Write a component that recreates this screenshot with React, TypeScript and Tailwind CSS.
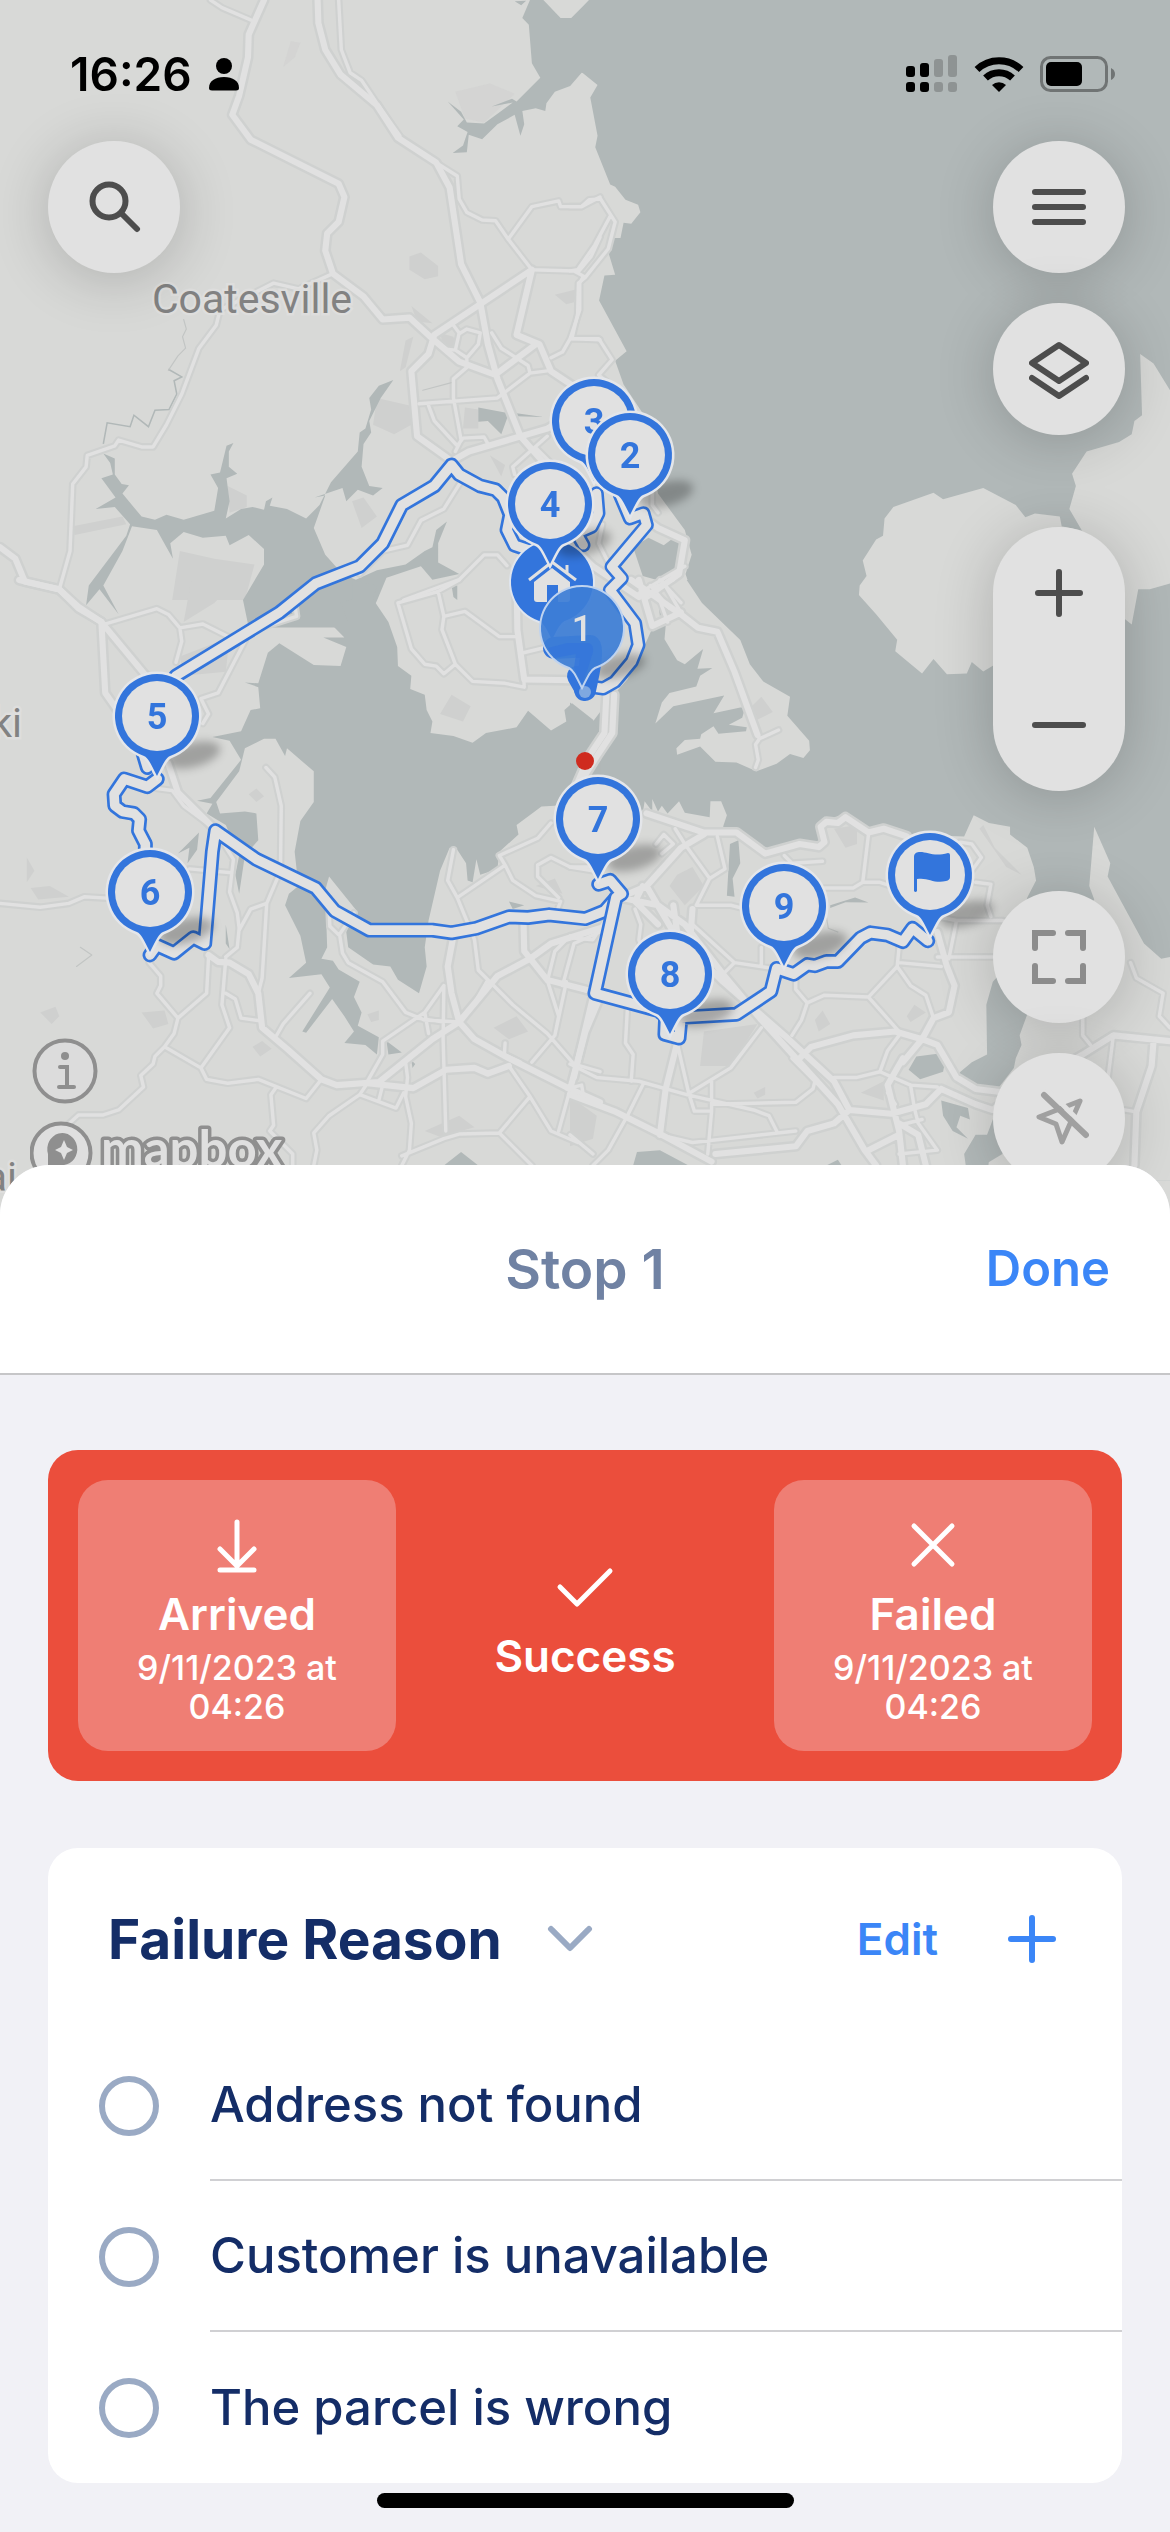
import React from "react";

/* ---------- Map data: four tiles, each on its own 1568-unit grid ---------- */

type Tile = { x: number; y: number; major: string[]; minor: string[]; thin: string[] };

const T = 600 / 1568;

const tiles: Tile[] = [
  {
    x: 0,
    y: 0,
    major: [
      "M690 0L650 90 648 150 625 250 607 300 655 365 885 480 900 515 885 580 855 610 850 655 870 715 950 775 1000 835 1070 830 1130 885 1200 945 1295 980",
      "M830 0L832 60 850 130 890 195 985 275 1040 360 1140 425 1175 490 1205 690 1255 790 1275 900 1300 990 1360 1140 1430 1220",
      "M1390 705L1135 875 1120 925 1075 970 1090 1140 1180 1205 1225 1180 1430 1120 1500 1080",
      "M1390 705L1350 875 1410 900 1440 970 1500 1010",
      "M1300 975L1400 900",
      "M0 1430L40 1460 65 1520 155 1540 205 1590 265 1625",
    ],
    minor: [
      "M550 0L580 20 655 52",
      "M885 0L892 130 915 190 945 210 985 270 1045 355",
      "M1140 425L1195 460 1200 520 1220 555 1260 575 1295 577 1328 625 1390 540 1460 525 1465 540 1520 540 1568 515",
      "M1328 625L1390 705 1500 708 1525 722 1515 740 1515 810 1490 885 1470 920 1440 935",
      "M1490 885L1568 888",
      "M1510 712L1545 670 1568 620",
      "M870 715L780 755 715 740 575 810 565 850 520 910 475 1030 435 1110 400 1168 370 1168 310 1150 300 1165 228 1190 225 1220 190 1265 183 1440 155 1540",
      "M1185 850L1200 870 1190 915 1220 935 1250 900 1255 870 1220 860 1200 872M1160 912L1190 915",
      "M1220 935L1220 960 1185 990 1185 1040 1205 1150 1190 1180",
      "M1095 1055L1300 1040 1385 975 1380 955 1310 910 1285 870M1385 975L1440 968",
      "M1120 1060L1135 1100 1195 1165 1210 1145 1265 1142 1275 1160",
      "M1210 1250L1160 1330 1100 1360 1065 1425 1000 1440 940 1500",
      "M1055 1568L1200 1515 1265 1450 1300 1450 1325 1478",
      "M1430 1140L1340 1220 1345 1240M1400 1170L1460 1230",
    ],
    thin: ["M480 835L487 860 477 880 485 910 465 930 440 968", "M1105 1020L1180 1000"],
  },
  {
    x: 570,
    y: 0,
    major: ["M190 1350L230 1380 300 1412 285 1500 200 1560", "M0 1420L60 1480 180 1560", "M0 1080L40 1060"],
    minor: [
      "M0 540L30 540 50 522 80 520 118 580 100 650 40 725 22 740 20 820 5 885 75 885 110 940 75 980 130 1025",
      "M105 565L65 640 20 705 0 708",
      "M215 1290L215 1320 230 1340",
      "M180 1550L300 1480M210 1530L260 1590M235 1515L290 1575",
      "M85 1370L75 1420 100 1470",
    ],
    thin: [],
  },
  {
    x: 0,
    y: 580,
    major: [
      "M50 0L155 25 205 70 265 110 385 255",
      "M265 110L275 295 310 345",
      "M440 480L465 555 560 650",
      "M545 980L570 998 600 1000 650 1030 675 1080 685 1170 750 1225 840 1305 880 1320 990 1312 1130 1200 1200 1155 1300 1035 1385 990 1440 950 1568 910",
      "M1185 930L1170 1010 1180 1080 1200 1155 1240 1200 1330 1250 1490 1330 1568 1365",
      "M960 1315L1080 1328 1165 1280 1240 1275 1275 1290 1330 1270",
      "M1350 0L1352 130 1370 260 1500 262",
      "M1368 890L1370 970 1430 1045 1568 1080",
      "M1568 1090L1530 1180 1490 1330",
      "M1605 300L1600 400 1560 460 1510 540",
    ],
    minor: [
      "M265 118L410 75 440 90 470 125 475 160 460 215M470 125L530 115 600 150 775 95 770 60",
      "M640 160L570 295 525 310 545 350 530 375",
      "M410 545L450 550 480 590 560 650 610 730 600 815 620 870 625 910 620 960 590 985",
      "M0 845L105 855 180 845 220 828 290 832",
      "M495 755L605 765",
      "M695 490L718 515 735 590 733 760 697 845 690 960 685 1040 675 1080",
      "M697 845L655 860 625 915",
      "M390 1000L420 1035 420 1060 410 1080 465 1145 455 1185 430 1220 405 1245 400 1265 368 1295 375 1325 310 1385 270 1398 205 1398 170 1430",
      "M545 985L540 1080 465 1145M430 1220L525 1275 600 1170 580 1110 590 990",
      "M590 1080L615 1095 630 1145 680 1152",
      "M525 1275L540 1305 595 1315 675 1305 800 1355 840 1305",
      "M720 1195L740 1160 810 1080M720 1328L708 1345 715 1425 705 1440 765 1500 765 1530",
      "M860 860L862 905 888 930 895 975 910 1000 1000 1050 1060 1130 1110 1150 1200 1155",
      "M925 870L888 925",
      "M1185 705L1170 785 1195 830 1240 940 1250 1020 1340 1110 1430 1185 1500 1265 1568 1285",
      "M1195 830L1320 745 1305 720 1405 675 1440 635M1320 745L1340 785 1400 825 1465 840 1450 880",
      "M1460 830L1405 775 1405 745 1440 725 1490 750 1568 750",
      "M1040 60L1145 30 1200 0M1145 30L1160 95 1215 82 1305 148 1350 148M1160 95L1155 130 1190 220 1160 245 1140 225 1110 220 1075 180 1040 60",
      "M1190 220L1235 265 1320 270 1370 280 1368 240M1368 190L1430 175",
      "M1160 1060L1158 1200 1165 1440M1160 1060L1110 1130 1000 1205 1000 1240 960 1310",
      "M1110 1130L1120 1185M1090 1145L1160 1155M1275 1045L1240 1105M1240 1105L1190 1160",
      "M1060 1260L1065 1300 1060 1350 1075 1420 1070 1490 1050 1530",
      "M960 1315L940 1345 1035 1380 1055 1340M1000 1320L990 1360M940 1345L860 1400 820 1445 828 1490 820 1530",
      "M1050 1505L1160 1460 1200 1448 1305 1445 1385 1350 1330 1270M1305 1445L1390 1530",
      "M1385 1350L1440 1440 1510 1470M1490 1330L1460 1440M1430 1045L1460 1140 1450 1190 1390 1260M1480 1050L1450 1190",
      "M1430 1050L1450 970 1490 930M1568 920L1500 950 1470 1060",
      "M1320 1210L1318 1240 1360 1260M1480 1330L1520 1320 1525 1350",
    ],
    thin: ["M200 1010L240 980 210 960"],
  },
  {
    x: 570,
    y: 580,
    major: [
      "M160 0L290 90 335 125 385 135 430 240 490 405",
      "M95 300L90 400 50 460 15 540",
      "M290 85L215 120 180 0",
      "M200 610L350 660 435 660 510 715 600 690 650 698 665 685 655 645 670 632 700 635 720 620 780 660 820 650 880 670",
      "M350 665L290 700 200 800 130 830",
      "M130 830L230 850 300 900 400 1030 500 1150 600 1260 700 1370 770 1490 800 1530",
      "M200 800L270 920 400 1050 560 1190 690 1310 730 1385 840 1395 930 1370 970 1330",
      "M600 1250L630 1220 740 1190 850 1180 920 1200 960 1215 1010 1300 1060 1330 1140 1340",
      "M870 1250L830 1320 860 1440 870 1530M920 1200L870 1260",
      "M960 920L985 1010 1005 1060 990 1130 950 1145 920 1200",
      "M0 1345L120 1390 240 1450 370 1520",
      "M380 1500L590 1480 620 1440 690 1420 730 1385",
      "M970 1330L1060 1370 1105 1385 1160 1340 1340 1240 1420 1190 1568 1205",
      "M1525 1205L1520 1270 1480 1390 1475 1530",
      "M60 1090L10 1300M280 1210L250 1330 235 1450",
      "M190 800L170 840 230 900M270 850L280 920M320 860L315 930",
      "M860 1420L910 1450 930 1530",
      "M780 1490L860 1450",
    ],
    minor: [
      "M490 405L495 415 485 430 492 470 485 490M495 415L545 392",
      "M195 40L230 40 255 110M240 0L290 85M215 20L270 0",
      "M385 670L405 755 365 780 300 690M365 780L330 850 420 850 460 860",
      "M275 650L300 690M225 690L245 665 270 690 240 715",
      "M780 665L765 790 810 790 840 800M765 790L740 805 665 805M560 720L580 740 660 735",
      "M1020 685L1050 690 1075 725 1050 760M1060 790L1100 795 1090 850 1100 880",
      "M960 880L1010 890 1130 890 1170 900M1010 890L990 990M960 985L1130 985",
      "M860 960L855 1010 780 1090 665 1085 620 1105 590 1070 590 1040M855 1010L890 1060 930 1085 950 1145M860 1000L970 1010",
      "M780 1090L860 1180M620 1105L605 1150 580 1190",
      "M500 1170L420 1275 305 1345 180 1310 70 1300 0 1265",
      "M280 1210L310 1340 325 1388 370 1388 370 1310M305 1345L480 1385 520 1400 540 1440",
      "M150 1120L145 1210 165 1240 160 1310",
      "M370 1370L590 1365 635 1330 640 1310 580 1250",
      "M235 1450L320 1470 590 1440M370 1388L360 1500",
      "M690 1300L750 1300 810 1285 890 1320 960 1325M810 1285L830 1230 860 1190M890 1320L900 1380 910 1420 960 1490 860 1500",
      "M320 900L430 1000 530 1015M430 1000L400 1030M500 960L500 1010",
      "M0 935L60 940 130 830M0 1060L60 1080M0 750L60 760M0 1450L60 1500",
      "M190 1320L150 1400M150 1400L100 1490 60 1530",
      "M1420 1190L1405 1310 1400 1440M1340 1140L1340 1190 1360 1215M1465 1000L1480 1040 1550 1080 1540 1140 1568 1170M1420 1380L1480 1390",
      "M170 860L185 900 180 940 200 1000",
      "M860 1425L920 1410M850 1370L830 1340",
    ],
    thin: ["M670 880L675 910 700 920"],
  },
];

const WATER = "#b1b8b8";
const LAND = "#d8d9d7";
const BLUE = "#3375dc";

const at = (x: number, y: number, s = T) => `translate(${x} ${y}) scale(${s})`;

function Terrain() {
  return (
    <>
      <rect width="1170" height="1300" fill={LAND} />
      <g fill="#cfd0cf" transform={at(0, 0)}>
        <path d="M1070 670L1100 660 1145 695 1145 722 1110 730 1070 705ZM1075 800L1130 845 1090 840ZM985 1040L1070 1060 1075 1110 1030 1135 975 1110ZM190 1375L320 1350 330 1370 195 1398ZM595 1270L645 1295 645 1325 600 1340ZM920 1310L950 1300 985 1350 945 1380ZM1280 1190L1320 1215 1310 1245ZM470 1440L560 1460 665 1475 640 1568 450 1568ZM1060 890L1080 880 1060 960 1045 970ZM1215 1065L1250 1070 1250 1120 1210 1120ZM1150 870L1185 880 1190 905 1160 910ZM1450 770L1510 755 1500 790 1480 795Z" />
        <path d="M740 175L760 108 785 112 770 150ZM1190 240L1280 218 1345 245 1265 320 1215 310Z" opacity=".5" />
      </g>
      <g fill="#cfd0cf" transform={at(0, 580)}>
        <path d="M105 1130L145 1115 155 1140 135 1160ZM370 1130L430 1125 440 1160 400 1172ZM660 1220L685 1205 710 1225 680 1245ZM960 1135L990 1125 990 1150 970 1155ZM70 725L90 760 70 790ZM80 805L130 800 180 828 100 835ZM650 560L670 545 690 565 670 580ZM470 200L600 150 590 240 480 250ZM1110 1440L1200 1400 1240 1430 1150 1455ZM1290 1170L1350 1140 1380 1180 1330 1200ZM1180 300L1230 330 1210 370 1150 350ZM1400 800L1450 780 1470 820ZM500 0L620 0 560 60 480 110Z" />
      </g>
      <g fill={WATER} transform={at(0, 0)}>
        <path d="M1385 0L1365 47 1382 65 1390 165 1412 203 1350 265 1338 258 1285 278 1340 268 1310 290 1265 323 1220 320 1205 292 1170 265 1212 312 1195 330 1222 345 1210 380 1183 400 1220 398 1225 352 1260 364 1300 325 1345 300 1360 355 1370 325 1365 290 1400 283 1425 290 1428 270 1450 240 1490 225 1520 190 1625 200 1625 0 1540 0 1497 47 1465 47 1420 0ZM1345 3L1362 14 1375 2Z" />
        <path d="M250 1330L302 1300 265 1250 295 1240 288 1210 270 1185 300 1198 300 1240 318 1265 337 1268 320 1290 370 1350 405 1358 435 1345 480 1358 560 1335 570 1275 550 1240 575 1235 592 1165 610 1158 598 1180 598 1220 620 1238 592 1250 600 1310 590 1355 630 1330 660 1325 690 1332 695 1310 712 1300 705 1322 750 1330 800 1355 835 1320 865 1260 935 1180 940 1130 955 1120 970 1070 965 1040 990 1008 1028 993 995 1040 965 1100 970 1130 950 1160 945 1220 965 1270 1000 1275 975 1295 935 1280 905 1310 895 1275 822 1300 850 1295 820 1380 850 1450 895 1500 930 1515 985 1490 1060 1475 1110 1440 1130 1430 1140 1385 1168 1363 1145 1420 1145 1470 1200 1500 1130 1515 1100 1480 1010 1510 985 1570 950 1640 650 1640 635 1568 690 1475 690 1435 650 1398 600 1425 590 1400 530 1405 480 1390 445 1420 452 1460 435 1430 410 1385 345 1375 320 1440 270 1530 310 1605 260 1540 225 1582 232 1530 330 1400 340 1370 300 1325Z" />
        <path d="M1250 1065L1330 1080 1310 1135 1275 1100 1250 1102ZM1350 1080L1420 1090 1350 1088ZM1180 1530L1195 1530 1195 1568 1185 1560Z" />
        <path d="M440 965L475 985 455 995 462 1030 442 1070 405 1072 388 1115 350 1085 340 1115 280 1105 270 1160" fill="none" stroke={WATER} strokeWidth="4" />
      </g>
      <g transform={at(570, 0)}>
        <path
          fill={WATER}
          d="M50 0L0 50V215L30 188 72 222 53 255 72 355 66 385 105 482 118 488 145 522 178 535 184 555 160 585 140 582 132 622 108 622 102 665 118 718 90 720 76 785 148 918 118 943 140 1005 190 1080 230 1290 300 1385 318 1450 302 1500 335 1600H1568V0Z"
        />
        <path fill={WATER} d="M165 1430L205 1405 245 1425 265 1410 290 1420 275 1495 225 1515 190 1505Z" />
      </g>
      <g transform={at(570, 580)}>
        <path fill={WATER} d="M0 0H1568V1570H0Z" />
        <g fill={LAND}>
          <path d="M0 0H305L345 60 445 157 470 220 505 265 575 305 568 355 625 420 627 445 610 465 575 455 540 480 487 500 435 477 380 475 340 435 280 457 278 440 300 418 340 415 343 403 375 382 388 402 460 395 462 385 415 378 450 360 458 333 445 333 375 348 403 302 270 330 223 375 240 320 260 295 330 278 340 250 372 230 333 232 348 180 300 220 280 210 247 155 250 120 220 115 200 160 150 260 105 310 60 370 0 320Z" />
          <path d="M0 600L165 560 190 610 195 578 215 605 215 572 230 605 240 590 255 610 285 578 300 608 365 620 367 578 395 578 410 615 400 645 440 655 500 710 560 700 640 700 660 690 645 640 670 625 720 612 780 650 820 640 880 665 1030 670 1055 615 1095 635 1150 645 1150 665 1195 700 1212 750 1218 785 1195 830 1150 1000 1105 1050 1088 1110 1090 1240 1050 1260 1015 1290 1060 1320 1110 1340 1110 1450 1060 1450 1030 1500 1040 1570H0Z" />
          <path d="M1370 645L1412 740 1405 775 1500 950 1545 990 1568 985V1570H1090L1110 1340 1160 1275 1165 1250 1180 1215 1175 1190 1195 1135 1230 1000 1370 835 1357 800 1362 740Z" />
        </g>
        <g fill={WATER}>
          <path d="M440 680L445 740 425 780 430 828 410 825 418 690ZM885 1280L905 1245 985 1235 975 1285 915 1305ZM165 1530L175 1495 235 1490 310 1530ZM970 1360L1040 1380 1045 1410 1020 1400 1010 1430 1040 1460 1000 1440 975 1400ZM680 850L745 830 780 843 720 842 680 857ZM1120 1370L1160 1380 1130 1500 1080 1530 1090 1450ZM230 45L250 65 235 95ZM670 1530L700 1515 710 1530Z" />
        </g>
        <path
          fill="#cfd0cf"
          d="M280 770L320 750 350 800 300 850 260 800ZM350 1180L490 1160 420 1270 340 1270ZM500 305L530 345 480 370 465 340ZM1080 640L1110 700 1180 770 1140 750 1070 650ZM640 1150L660 1125 680 1160 650 1180ZM880 1140L900 1110 930 1130 890 1155ZM760 1340L820 1310 820 1360ZM0 1350L70 1400 60 1460 0 1480ZM480 1340L510 1325 510 1345 490 1355ZM690 650L750 640 750 690 720 700Z"
        />
      </g>
      <g transform={at(570, 0)} fill={LAND}>
        <path d="M845 1325L950 1288 975 1305 1080 1275 1165 1320 1190 1352 1215 1342 1280 1350 1285 1375 1400 1400V1700L1105 1740 1080 1755 1050 1730 1037 1760 985 1762 950 1722 920 1760 850 1702 855 1672 800 1605 755 1555 757 1530 775 1505 765 1465 800 1410 818 1400 822 1355Z" />
        <path d="M1490 925L1525 950 1568 1020V1525L1515 1540 1485 1540 1468 1632 1440 1610 1340 1390 1305 1330 1322 1270 1312 1238 1350 1180 1435 1155 1468 1135 1475 1100 1495 1085Z" />
      </g>
      <g transform={at(0, 580)} fill={WATER}>
        <path d="M920 0L985 15 975 50 1015 110 1038 175 1040 225 1075 250 1072 285 1110 300 1115 340 1130 370 1125 400 1185 408 1235 425 1270 400 1350 385 1380 342 1440 393 1480 370 1475 340 1495 322 1550 365 1570 410 1570 560 1450 590 1415 592 1350 640 1355 665 1305 710 1300 755 1255 770 1245 730 1235 790 1222 785 1218 740 1195 705 1175 700 1150 760 1120 890 1110 960 1115 1010 1095 1080 1040 1045 1020 1010 975 1005 910 960 905 920 930 862 860 775 850 810 855 960 840 990 870 995 885 1018 940 1050 925 1090 945 1130 935 1165 990 1195 985 1240 955 1215 900 1210 925 1180 900 1140 868 1095 800 1183 790 1180 862 1065 840 1030 755 1040 800 1000 785 930 745 850 755 820 780 800 770 710 785 630 820 580 820 500 750 440 745 460 720 415 690 415 640 440 625 500 565 580 575 610 640 605 670 610 675 680 640 720 625 820 615 770 625 720 590 640 540 610 555 585 515 577 550 570 630 470 600 420 555 410 630 395 655 340 680 335 675 280 640 268 675 270 700 190 730 165 820 222 890 225 905 175 845 150 900 150 860 110 910 110 890 60 920 50Z" />
        <path d="M465 715L520 660 515 705 490 740 495 700ZM590 900L600 965 590 950ZM1010 1205L1050 1235 1015 1240ZM1160 1530L1205 1495 1250 1530ZM1330 840L1370 850 1340 860ZM1075 1255L1085 1265 1078 1275Z" />
      </g>
    </>
  );
}

function Roads() {
  return (
    <g fill="none" strokeLinecap="round" strokeLinejoin="round">
      {(["casing", "fill"] as const).map((pass) =>
        tiles.map((t) => (
          <g key={`${pass}${t.x}-${t.y}`} transform={at(t.x, t.y)} stroke={pass === "casing" ? "#cfd1d0" : "#e1e1e1"}>
            <path d={t.minor.join("")} strokeWidth={pass === "casing" ? 20 : 9} />
            <path d={t.major.join("")} strokeWidth={pass === "casing" ? 29 : 16} />
            {pass === "casing" && <path d={t.thin.join("") || "M0 0"} stroke="#c2c5c4" strokeWidth="3" />}
          </g>
        )),
      )}
    </g>
  );
}

const routes = [
  {
    transform: at(0, 0),
    k: 1,
    d: "M1390 1440L1345 1425 1325 1385 1333 1345 1315 1300 1295 1280 1255 1270 1200 1240 1180 1215 1135 1270 1050 1320 1000 1420 940 1480 825 1525 730 1601 460 1766 411 1850",
  },
  {
    transform: at(0, 580),
    k: 1,
    d: "M370 440L385 490M411 520L385 540 325 520 298 560 300 590 320 605 350 610 365 625 362 655 380 690 378 800M392 980L410 955 455 975 505 935 535 950 555 710 563 655 670 730 825 805 875 865 965 915 1130 915 1180 922 1245 910 1330 880 1380 882 1435 875 1530 885 1580 865 1615 825",
  },
  {
    transform: at(570, 580),
    k: 1,
    d: "M75 795L105 785 135 820 120 830 65 1080 230 1125 250 1140 248 1187 285 1197 290 1143 435 1135 525 1075 540 1015 585 1030 620 1005 640 1008 670 997 700 997 760 935 785 922 830 928 870 945 895 910 935 943",
  },
  {
    transform: at(480, 360, 1 / 3),
    k: 1.1,
    d: "M350 400L355 460 335 500 290 520 310 555M420 405L450 475 490 460 500 495 395 620 425 655 390 690 465 790 475 855 455 905 405 965 370 985 330 980",
  },
];

function Routes() {
  return (
    <g fill="none" strokeLinecap="round" strokeLinejoin="round">
      {routes.map((r) => (
        <g key={r.d} transform={r.transform}>
          <path d={r.d} stroke={BLUE} strokeWidth={39 * r.k} />
          <path d={r.d} stroke="#e1e1e1" strokeWidth={25 * r.k} />
        </g>
      ))}
    </g>
  );
}

const PIN = "M-13 40A42 42 0 1 1 13 40C9 42 7 46 0 60C-7 46 -9 42 -13 40Z";

function Pin({ x, y, label }: { x: number; y: number; label?: string }) {
  return (
    <g transform={`translate(${x} ${y})`}>
      <path d={PIN} fill="#e1e1e1" stroke="#e4e6ea" strokeWidth="5" />
      <path d={PIN} fill={BLUE} />
      <circle r="35" fill="#e1e1e1" />
      {label ? (
        <text y="13" textAnchor="middle" fontSize="36" fontWeight="700" fill={BLUE} fontFamily="Roboto, sans-serif">
          {label}
        </text>
      ) : (
        <path
          d="M-16 16V-18C-16 -22 -13 -23 -10 -23C-2 -23 4 -18 18 -22Q20 -22 20 -20V2Q20 5 16 6C4 9 -2 2 -13 4V16Q-14.500 18 -16 16Z"
          fill={BLUE}
        />
      )}
    </g>
  );
}

const pinShadows = [
  [157, 716],
  [150, 892],
  [598, 819],
  [670, 974],
  [784, 906],
  [930, 875],
  [630, 455],
];

function MapCanvas() {
  return (
    <svg
      className="absolute inset-0 h-full w-full"
      viewBox="0 0 1170 1240"
      preserveAspectRatio="xMidYMin slice"
      role="img"
      aria-label="Delivery route map"
    >
      <defs>
        <filter id="soft" x="-50%" y="-80%" width="200%" height="260%">
          <feGaussianBlur stdDeviation="4" />
        </filter>
      </defs>
      <Terrain />
      <Roads />
      <g fontFamily="Roboto, sans-serif" fontSize="41" fill="#828282" stroke="#dededd" strokeWidth="5" paintOrder="stroke">
        <text x="252" y="313" textAnchor="middle">Coatesville</text>
        <text x="22" y="737" textAnchor="end">ki</text>
        <text x="17" y="1191" textAnchor="end">ai</text>
      </g>
      <Routes />
      <g fill="#000" fillOpacity=".26" filter="url(#soft)">
        {pinShadows.map(([x, y]) => (
          <ellipse key={x} cx={x + 36} cy={y + 39} rx="28" ry="12" transform={`rotate(-15 ${x + 36} ${y + 39})`} />
        ))}
        <ellipse cx="620" cy="666" rx="26" ry="11" transform="rotate(-15 620 666)" />
      </g>
      <circle cx="585" cy="761" r="9" fill="#cf2b1f" />
      <Pin x={594} y={421} label="3" />
      <Pin x={630} y={455} label="2" />
      <path d={PIN} transform="translate(552 582)" fill={BLUE} stroke="#dfe5ee" strokeWidth="2" />
      <ellipse cx="584" cy="543" rx="28" ry="12" transform="rotate(-15 584 543)" fill="#000" fillOpacity=".25" filter="url(#soft)" />
      <g transform="translate(552 582)">
        <path d="M-18 0L0 -14 18 0V17Q18 20 15 20H-15Q-18 20 -18 17Z" fill="#e1e1e1" />
        <path d="M-23 -2L0 -20 24 -2M15 -9V-17" fill="none" stroke="#e1e1e1" strokeWidth="3" />
        <rect x="-5" y="3" width="11" height="18" fill={BLUE} />
      </g>
      <Pin x={550} y={504} label="4" />
      <path
        d="M554 648L590 646Q594 650 585 690"
        fill="none"
        stroke={BLUE}
        strokeWidth="22"
        strokeLinecap="round"
        strokeLinejoin="round"
      />
      <path d="M577 676L585 690" stroke={BLUE} strokeWidth="20" strokeLinecap="round" />
      <circle cx="585" cy="692" r="6" fill="#7fa8e0" />
      <g transform="translate(582 628)">
        <path d={PIN} fill="#3d7ed6" fillOpacity=".93" stroke="#bfd3ef" strokeWidth="2" />
        <path d="M-34 20L-15 15H7Q12 17 11 24L6 40 0 56 -8 40 -6 26 -28 30Z" fill={BLUE} opacity=".7" />
        <text y="13" textAnchor="middle" fontSize="36" fontWeight="500" fill="#e1e1e1" fontFamily="Roboto, sans-serif">
          1
        </text>
      </g>
      <Pin x={157} y={716} label="5" />
      <Pin x={150} y={892} label="6" />
      <Pin x={598} y={819} label="7" />
      <Pin x={670} y={974} label="8" />
      <Pin x={784} y={906} label="9" />
      <Pin x={930} y={875} />
    </svg>
  );
}

/* ---------- Controls over the map ---------- */

function RoundButton({ label, className = "", children }: { label: string; className?: string; children: React.ReactNode }) {
  return (
    <button
      type="button"
      aria-label={label}
      className={`flex size-[132px] shrink-0 items-center justify-center rounded-full bg-[#e1e1e1] shadow-[0_6px_60px_rgba(0,0,0,0.2)] ${className}`}
    >
      {children}
    </button>
  );
}

function StatusBar() {
  return (
    <div className="flex items-center justify-between pt-[46px] pr-[54px] pl-[70px]">
      <div className="flex items-center gap-4">
        <span className="text-[46px] leading-[56px] font-semibold text-black">16:26</span>
        <svg className="h-[34px] w-[32px]" viewBox="0 0 32 34">
          <circle cx="16" cy="9" r="8" />
          <path d="M1 31C1 24 7 20 16 20S31 24 31 31Q31 33.500 28 33.500H4Q1 33.500 1 31Z" />
        </svg>
      </div>
      <div className="flex items-center gap-4">
        <svg className="h-[38px] w-[52px]" viewBox="0 0 52 38">
          <rect x="0" y="11" width="9" height="11" rx="3" />
          <rect x="14" y="8" width="9" height="14" rx="3" />
          <rect x="0" y="27" width="9" height="10" rx="3" />
          <rect x="14" y="27" width="9" height="10" rx="3" />
          <g fill="#8e9393">
            <rect x="28" y="4" width="9" height="18" rx="3" />
            <rect x="42" y="0" width="9" height="22" rx="3" />
            <rect x="28" y="27" width="9" height="10" rx="3" />
            <rect x="42" y="27" width="9" height="10" rx="3" />
          </g>
        </svg>
        <svg className="h-[36px] w-[50px]" viewBox="0 0 50 36">
          <g fill="none" stroke="#000" strokeWidth="7">
            <path d="M3 13.500A32 32 0 0 1 47 13.500" />
            <path d="M11.500 22A20 20 0 0 1 38.500 22" />
          </g>
          <path d="M25 36L18 29A10 10 0 0 1 32 29Z" />
        </svg>
        <svg className="h-[36px] w-[76px]" viewBox="0 0 76 36">
          <rect x="1.500" y="1.500" width="65" height="33" rx="9" fill="none" stroke="#707474" strokeWidth="3" />
          <rect x="6" y="6" width="36" height="24" rx="5" />
          <path d="M71 12Q75 14 75 18T71 24Z" fill="#707474" />
        </svg>
      </div>
    </div>
  );
}

function MapControls() {
  const line = "fill-none stroke-[#4d4d4d] stroke-6 [stroke-linecap:round] [stroke-linejoin:round]";
  return (
    <div className="flex items-start justify-between pt-[39px] pr-[45px] pl-[30px]">
      <div className="flex flex-col items-start">
        <RoundButton label="Search" className="ml-[18px]">
          <svg className={`size-[54px] ${line}`} viewBox="0 0 54 54">
            <circle cx="22" cy="21" r="16.500" />
            <path d="M34 33L50 49" />
          </svg>
        </RoundButton>
        <button type="button" aria-label="Map information" className="mt-[765px] ml-[2px]">
          <svg className="size-[66px]" viewBox="0 0 66 66">
            <circle cx="33" cy="33" r="30.500" fill="#dcdcdc" stroke="#8f8f8f" strokeWidth="4" />
            <circle cx="33" cy="18" r="4" fill="#8f8f8f" />
            <path d="M28 29H35V48M27 49H42" fill="none" stroke="#8f8f8f" strokeWidth="4" strokeLinecap="round" />
          </svg>
        </button>
        <a href="#mapbox" aria-label="Mapbox" className="mt-[17px] flex items-center">
          <svg className="h-[64px] w-[260px]" viewBox="0 0 260 64">
            <circle cx="31" cy="32" r="29.500" fill="#dfdfdf" stroke="#8f8f8f" strokeWidth="4" />
            <path d="M18 56V33A15 16 0 1 1 34 44Q25 46 18 56Z" fill="#8f8f8f" />
            <path d="M34 19L37 26 43 29 37 32 34 39 31 32 25 29 31 26Z" fill="#e1e1e1" />
            <text
              x="71"
              y="46"
              fontFamily="Lato, sans-serif"
              fontSize="51"
              fontWeight="700"
              fill="#dfdfdf"
              stroke="#8f8f8f"
              strokeWidth="7"
              strokeLinejoin="round"
              paintOrder="stroke"
            >
              mapbox
            </text>
          </svg>
        </a>
      </div>
      <div className="flex flex-col items-center">
        <RoundButton label="Menu">
          <svg className={`size-[60px] ${line}`} viewBox="0 0 60 60">
            <path d="M6 15H54M6 30H54M6 45H54" />
          </svg>
        </RoundButton>
        <RoundButton label="Map layers" className="mt-[30px]">
          <svg className={`size-[60px] ${line}`} viewBox="0 0 60 60">
            <path d="M30 6L57 24 30 42 3 24Z M3 39L30 57 57 39" />
          </svg>
        </RoundButton>
        <div className="mt-[92px] flex w-[132px] flex-col overflow-visible rounded-full bg-[#e1e1e1] shadow-[0_6px_60px_rgba(0,0,0,0.2)]">
          <button type="button" aria-label="Zoom in" className="flex h-[132px] items-center justify-center">
            <svg className={`size-[60px] ${line}`} viewBox="0 0 60 60">
              <path d="M9 30H51M30 9V51" />
            </svg>
          </button>
          <button type="button" aria-label="Zoom out" className="flex h-[132px] items-center justify-center">
            <svg className={`size-[60px] ${line}`} viewBox="0 0 60 60">
              <path d="M6 30H54" />
            </svg>
          </button>
        </div>
        <RoundButton label="Fit route" className="mt-[100px]">
          <svg className="size-[60px] fill-none stroke-[#8c8c8c] stroke-6 [stroke-linecap:round]" viewBox="0 0 60 60">
            <path d="M6 21V6H24M39 6H54V21M54 39V54H39M24 54H6V39" />
          </svg>
        </RoundButton>
        <RoundButton label="Follow location off" className="mt-[30px]">
          <svg className="size-[60px] fill-none stroke-[#a0a0a0] stroke-5 [stroke-linecap:round] [stroke-linejoin:round]" viewBox="0 0 60 60">
            <path d="M51 12L10 28 27 35 33 53Z" />
            <path d="M19 1L59 41" className="stroke-[#e1e1e1]" />
            <path d="M15 6L57 46" className="stroke-6" />
          </svg>
        </RoundButton>
      </div>
    </div>
  );
}

/* ---------- Bottom sheet ---------- */

const stroke = "fill-none stroke-white stroke-5 [stroke-linecap:round] [stroke-linejoin:round]";

function StatusAction({ title, time, filled, children }: { title: string; time?: string; filled?: boolean; children: React.ReactNode }) {
  return (
    <button
      type="button"
      className={`flex min-h-[271px] flex-col items-center justify-center rounded-[30px] px-8 pt-[10px] text-white ${filled ? "bg-[#ef7e74]" : ""}`}
    >
      {children}
      <span className="mt-[10px] text-[44px] leading-[56px] font-semibold">{title}</span>
      {time && <span className="mt-[6px] text-[34px] leading-[39px] font-medium">{time}</span>}
    </button>
  );
}

function StopStatus() {
  return (
    <section className="grid grid-cols-3 gap-[30px] rounded-[30px] bg-[#eb4e3c] p-[30px]">
      <StatusAction title="Arrived" time="9/11/2023 at 04:26" filled>
        <svg className={`size-[60px] ${stroke}`} viewBox="0 0 60 60">
          <path d="M30 6V50M13 33L30 50 47 33M13 54H47" />
        </svg>
      </StatusAction>
      <StatusAction title="Success">
        <svg className={`size-[60px] ${stroke}`} viewBox="0 0 60 60">
          <path d="M5 29L22 46 55 13" />
        </svg>
      </StatusAction>
      <StatusAction title="Failed" time="9/11/2023 at 04:26" filled>
        <svg className={`size-[60px] ${stroke}`} viewBox="0 0 60 60">
          <path d="M11 10L49 48M49 10L11 48" />
        </svg>
      </StatusAction>
    </section>
  );
}

const reasons = ["Address not found", "Customer is unavailable", "The parcel is wrong"];

function FailureReasons() {
  return (
    <section className="overflow-hidden rounded-[30px] bg-white">
      <div className="flex h-[182px] items-center justify-between pr-[60px] pl-[60px]">
        <button type="button" className="flex items-center gap-[44px] text-[#142d67]">
          <span className="text-[55px] leading-[64px] font-bold">Failure Reason</span>
          <svg className="h-[30px] w-[48px]" viewBox="0 0 48 30">
            <path d="M5 5L24 24 43 5" fill="none" stroke="#9aaac4" strokeWidth="6" strokeLinecap="round" strokeLinejoin="round" />
          </svg>
        </button>
        <div className="flex items-center gap-16 text-[#3b86f7]">
          <button type="button" className="text-[44px] leading-[56px] font-semibold">Edit</button>
          <button type="button" aria-label="Add failure reason">
            <svg className="size-[60px]" viewBox="0 0 60 60">
              <path d="M9 30H51M30 9V51" fill="none" stroke="currentColor" strokeWidth="6" strokeLinecap="round" />
            </svg>
          </button>
        </div>
      </div>
      <div role="radiogroup" aria-label="Failure Reason">
        {reasons.map((reason, i) => (
          <label key={reason} className="flex items-stretch gap-[51px] pl-[51px]">
            <input
              type="radio"
              name="reason"
              className="size-[60px] shrink-0 appearance-none self-center rounded-full border-6 border-[#9aaac4] checked:bg-[#3b86f7]"
            />
            <span
              className={`flex h-[151px] flex-1 items-center text-[49px] leading-[60px] font-medium text-[#142d67] ${
                i < reasons.length - 1 ? "border-b-2 border-[#d0d0d3]" : ""
              }`}
            >
              {reason}
            </span>
          </label>
        ))}
      </div>
    </section>
  );
}

export default function App() {
  return (
    <main className="min-h-screen overflow-hidden bg-[#f1f1f6] font-[Inter,sans-serif]">
      <section className="relative h-[1240px] overflow-hidden bg-[#d8d9d7]">
        <MapCanvas />
        <div className="relative">
          <StatusBar />
          <MapControls />
        </div>
      </section>
      <section className="relative -mt-[75px] rounded-t-[50px] bg-[#f1f1f6]">
        <header className="grid h-[210px] grid-cols-3 items-center rounded-t-[50px] border-b-2 border-[#c6c6c8] bg-white px-[60px]">
          <h1 className="col-start-2 text-center text-[55px] leading-[64px] font-semibold text-[#7082a3]">Stop 1</h1>
          <button type="button" className="justify-self-end text-[49px] leading-[64px] font-semibold text-[#3b86f7]">Done</button>
        </header>
        <div className="flex flex-col gap-[67px] px-[48px] pt-[75px]">
          <StopStatus />
          <FailureReasons />
        </div>
        <div className="flex justify-center pt-[10px] pb-[24px]">
          <div className="h-[15px] w-[417px] rounded-full bg-black" />
        </div>
      </section>
    </main>
  );
}
